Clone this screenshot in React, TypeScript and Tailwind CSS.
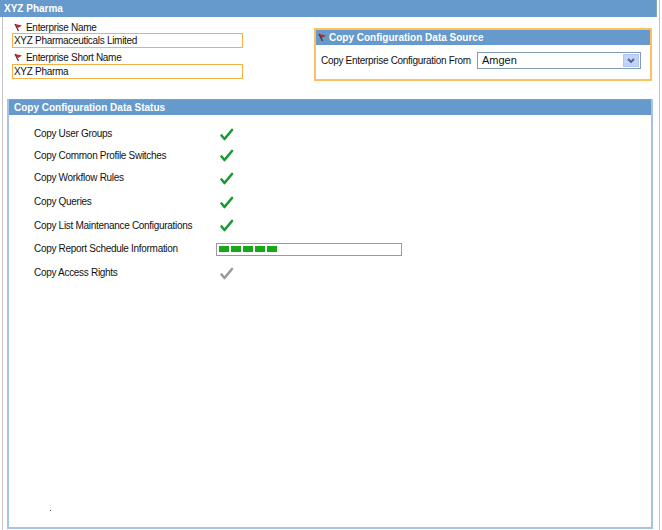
import React from "react";

const Flag = () => (
  <svg width="9" height="9" viewBox="0 0 9 9" className="shrink-0">
    <path d="M1 1 L8 2.5 L4 5 Z" fill="#d81e1e" />
    <path d="M1 1 L4.5 8" stroke="#5a2a2a" strokeWidth="1.3" />
  </svg>
);

const Check = ({ color }: { color: string }) => (
  <svg width="15" height="13" viewBox="0 0 15 13">
    <path d="M2.5 7.5 L5.5 11 L13 2" fill="none" stroke={color} strokeWidth="2.6" strokeLinecap="round" strokeLinejoin="round" />
  </svg>
);

const rows = [
  { label: "Copy User Groups", h: "h-[22px]", state: "done" },
  { label: "Copy Common Profile Switches", h: "h-[21px]", state: "done" },
  { label: "Copy Workflow Rules", h: "h-[24px]", state: "done" },
  { label: "Copy Queries", h: "h-[24px]", state: "done" },
  { label: "Copy List Maintenance Configurations", h: "h-[23px]", state: "done" },
  { label: "Copy Report Schedule Information", h: "h-[24px]", state: "progress" },
  { label: "Copy Access Rights", h: "h-[24px]", state: "pending" },
];

export default function App() {
  return (
    <div className="w-[662px] h-[530px] bg-white flex text-[#111] text-[10px] tracking-[-0.3px] leading-none whitespace-nowrap font-['Liberation_Sans',Arial,sans-serif] overflow-hidden">
      <div className="w-[657px] flex flex-col">
        <div className="h-[17px] bg-[#6699cc] border-r border-[#8aa] text-white font-bold tracking-normal leading-[17px] pl-[4px]">
          XYZ Pharma
        </div>
        <div className="flex-1 ml-[2px] border-l border-[#c4c4c4] flex flex-col">
          <div className="flex h-[64px]">
            <div className="w-[240px] pl-[9px] pt-[5px] flex flex-col">
              <div className="flex items-center gap-[3px] h-[11px] pl-[2px]">
                <Flag />
                <span>Enterprise Name</span>
              </div>
              <div className="h-[15px] border border-[#f5b347] pl-[1px] flex items-center">
                XYZ Pharmaceuticals Limited
              </div>
              <div className="mt-[4px] flex items-center gap-[3px] h-[11px] pl-[2px]">
                <Flag />
                <span>Enterprise Short Name</span>
              </div>
              <div className="mt-[1px] h-[15px] border border-[#f5b347] pl-[1px] flex items-center">
                XYZ Pharma
              </div>
            </div>
            <div className="ml-[71px] mt-[11px] w-[338px] h-[53px] border-2 border-[#fcc060] flex flex-col">
              <div className="h-[15px] bg-[#6699cc] flex items-center gap-[2px] pl-[2px] text-white font-bold tracking-normal">
                <Flag />
                <span>Copy Configuration Data Source</span>
              </div>
              <div className="flex items-center mt-[7px] pl-[5px]">
                <span className="w-[156px]">Copy Enterprise Configuration From</span>
                <div className="w-[164px] h-[17px] border border-[#7f9db9] flex items-center justify-between pl-[4px] pr-[1px] bg-white">
                  <span className="text-[11px] tracking-normal">Amgen</span>
                  <div className="w-[16px] h-[13px] bg-[#c1d3fb] border border-[#b0c4ee] flex items-center justify-center">
                    <svg width="8" height="6" viewBox="0 0 8 6">
                      <path d="M1 1 L4 4 L7 1" fill="none" stroke="#4d6185" strokeWidth="1.8" />
                    </svg>
                  </div>
                </div>
              </div>
            </div>
          </div>
          <div className="ml-[4px] mt-[18px] w-[646px] h-[430px] border-2 border-t-0 border-[#a5c3e8] flex flex-col">
            <div className="h-[16px] bg-[#6699cc] border-t border-[#9a9a9a] text-white font-bold tracking-normal leading-[15px] pl-[5px]">
              Copy Configuration Data Status
            </div>
            <div className="pt-[8px] pl-[25px] flex flex-col">
              {rows.map((r) => (
                <div key={r.label} className={`flex items-center ${r.h}`}>
                  <span className="w-[185px]">{r.label}</span>
                  {r.state === "done" && <Check color="#1a9a2e" />}
                  {r.state === "pending" && <Check color="#9a9a9a" />}
                  {r.state === "progress" && (
                    <div className="-ml-[3px] w-[186px] h-[13px] border border-[#9a9a9a] flex items-center gap-[2px] pl-[2px]">
                      {[0, 1, 2, 3, 4].map((i) => (
                        <div key={i} className="w-[10px] h-[6px] bg-[#16a816]" />
                      ))}
                    </div>
                  )}
                </div>
              ))}
            </div>
            <div className="flex-1" />
            <div className="h-[17px] pl-[41px]">
              <div className="w-[1px] h-[1px] bg-[#555]" />
            </div>
          </div>
        </div>
      </div>
      <div className="w-[5px] flex">
        <div className="ml-[2px] border-l border-[#c4c4c4]" />
      </div>
    </div>
  );
}
